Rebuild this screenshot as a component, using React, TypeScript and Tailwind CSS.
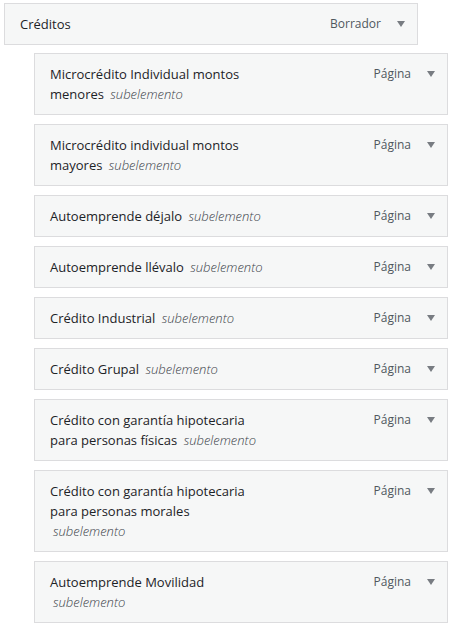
const items: { title: string; breakSub?: boolean }[] = [
  { title: "Microcrédito Individual montos menores" },
  { title: "Microcrédito individual montos mayores" },
  { title: "Autoemprende déjalo" },
  { title: "Autoemprende llévalo" },
  { title: "Crédito Industrial" },
  { title: "Crédito Grupal" },
  { title: "Crédito con garantía hipotecaria para personas físicas" },
  { title: "Crédito con garantía hipotecaria para personas morales", breakSub: true },
  { title: "Autoemprende Movilidad", breakSub: true },
];

function Arrow() {
  return (
    <svg width="8" height="6" viewBox="0 0 8 6" className="shrink-0">
      <path d="M0 0 L8 0 L4 6 Z" fill="#787c82" />
    </svg>
  );
}

function Handle({
  title,
  type,
  sub,
  breakSub,
}: {
  title: string;
  type: string;
  sub?: boolean;
  breakSub?: boolean;
}) {
  return (
    <div className="w-[414px] border border-[#dcdcde] bg-[#f6f7f7] pl-[15px] pr-[12px] py-[10px] flex items-start">
      <div className="w-[213px] text-[13px] leading-[20px] text-[#1d2327]">
        <span className="font-medium">{title}</span>
        {sub && (
          <>
            {breakSub ? <br /> : " "}
            <span className="italic font-light text-[#3c434a] ml-[3px]">subelemento</span>
          </>
        )}
      </div>
      <div className="ml-auto flex items-center h-[20px] gap-[16px]">
        <span className="text-[12px] text-[#50575e]">{type}</span>
        <Arrow />
      </div>
    </div>
  );
}

export default function App() {
  return (
    <div
      className="pt-[3px] pl-[4px] pb-4 bg-white min-h-screen"
      style={{ fontFamily: '"Open Sans", "Noto Sans", sans-serif' }}
    >
      <Handle title="Créditos" type="Borrador" />
      <div className="ml-[30px] mt-[8px] flex flex-col gap-[9px]">
        {items.map((it) => (
          <Handle key={it.title} title={it.title} type="Página" sub breakSub={it.breakSub} />
        ))}
      </div>
    </div>
  );
}
